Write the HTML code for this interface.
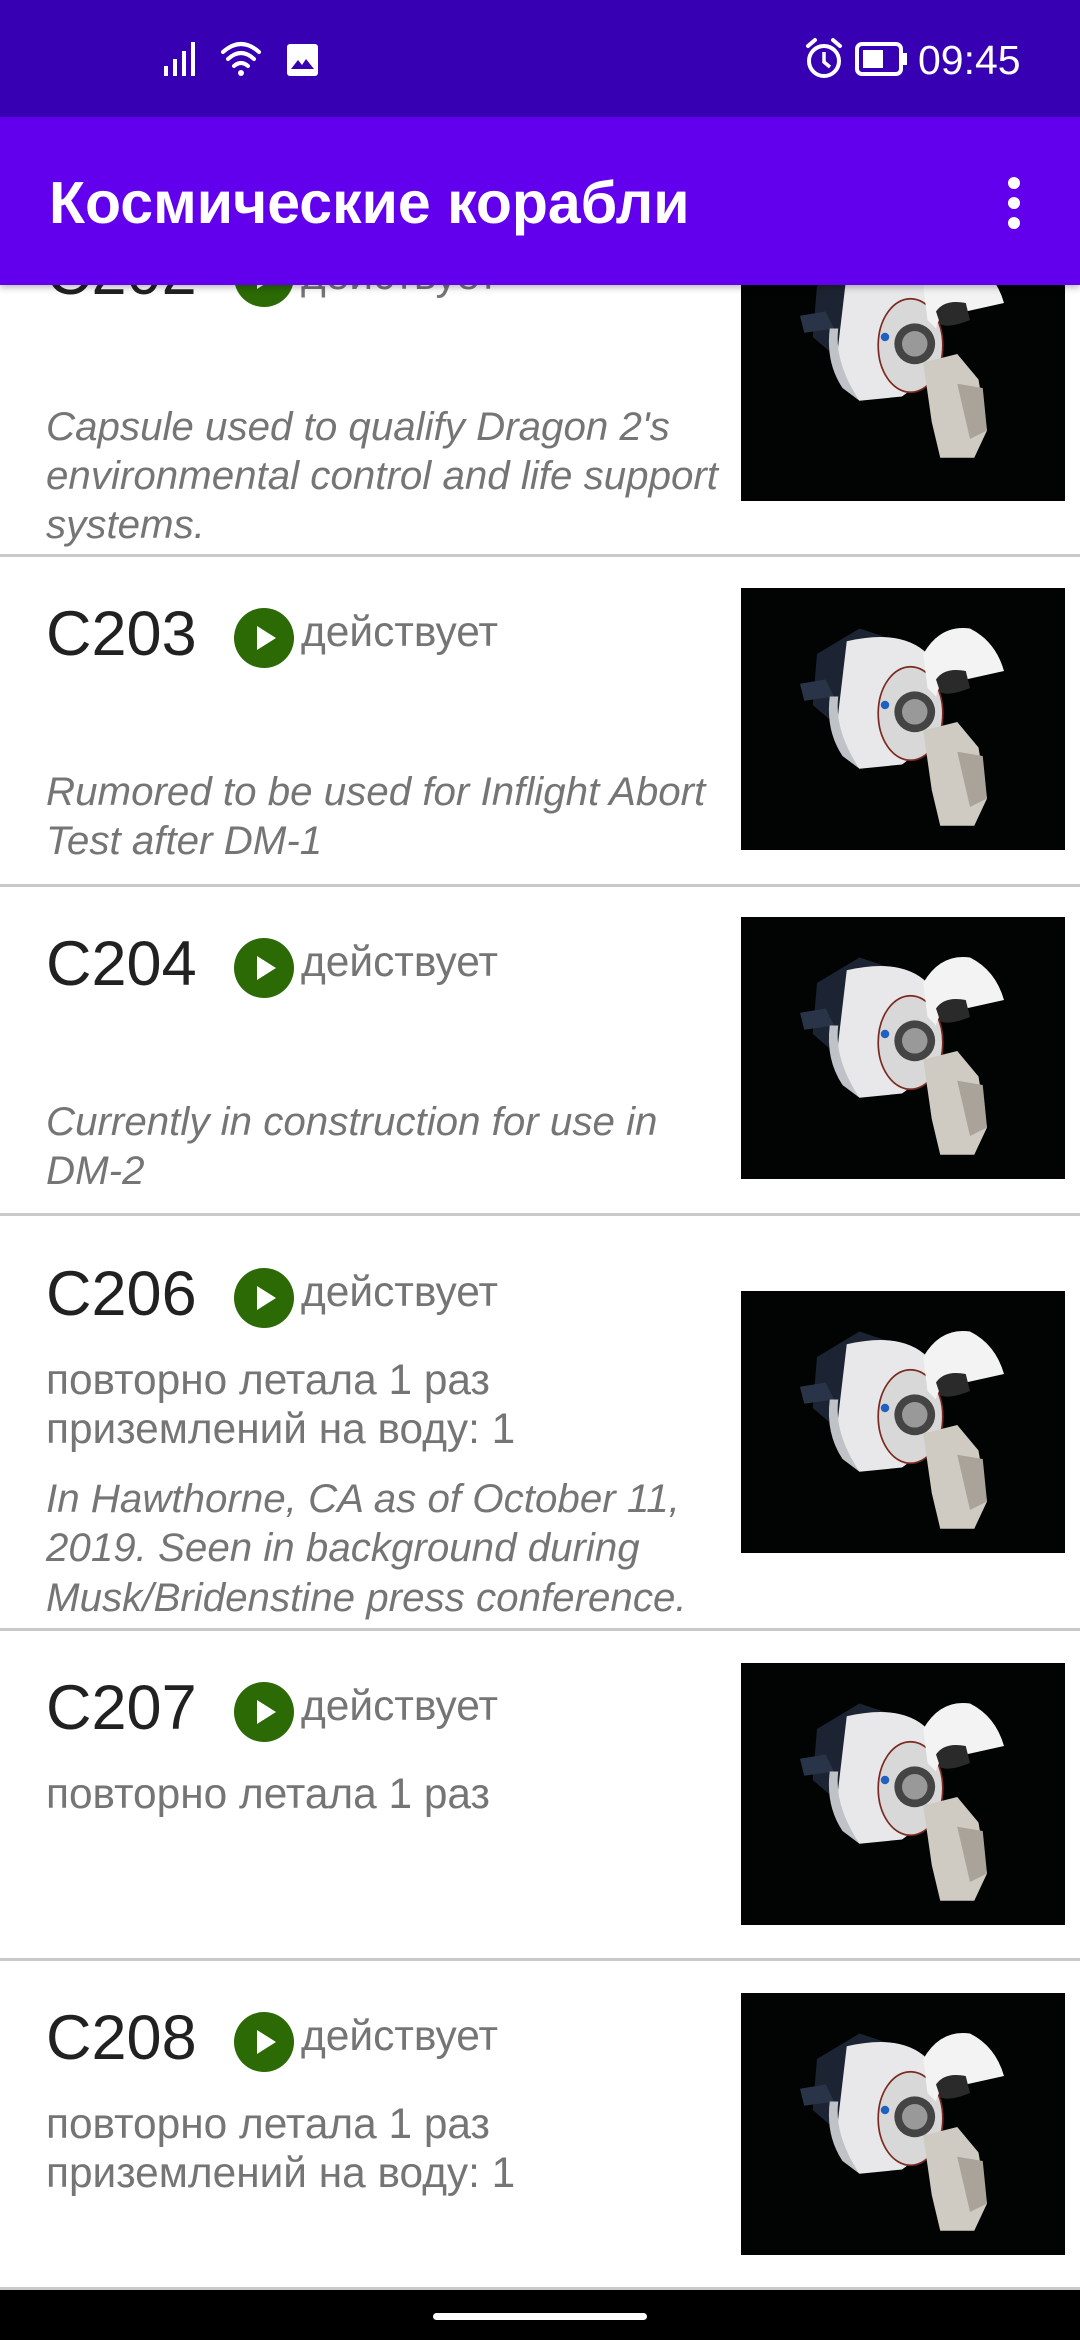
<!DOCTYPE html>
<html><head><meta charset="utf-8"><style>
*{margin:0;padding:0;box-sizing:border-box}
body{width:1080px;height:2340px;background:#fff;position:relative;overflow:hidden;font-family:"Liberation Sans",Roboto,sans-serif}
.a{position:absolute;white-space:nowrap}
.t{font-size:63px;color:#212121;line-height:70px;left:46px}
.s{font-size:42.5px;color:#757575;line-height:49px;left:301px}
.l{font-size:42.4px;color:#757575;line-height:49px;left:46px}
.d{font-size:40.3px;color:#757575;line-height:49px;left:46px;font-style:italic}
.c{position:absolute;left:234px;width:60px;height:60px;border-radius:50%;background:#2b6a04}
.c:after{content:"";position:absolute;left:23px;top:18px;border-left:19px solid #fff;border-top:12px solid transparent;border-bottom:12px solid transparent}
.hr{position:absolute;left:0;width:1080px;height:3px;background:#c9c9c9}
.img{position:absolute;left:741px;width:324px;height:262px;background:#020404;overflow:hidden}
</style></head><body>
<svg width="0" height="0" style="position:absolute"><defs>
<g id="cap" transform="translate(25,15) scale(0.85)">
<path d="M60 60 L110 30 L140 40 L120 120 L90 150 L55 120 Z" fill="#1c2433"/>
<path d="M40 95 L70 90 L80 110 L45 115Z" fill="#2a3448"/>
<path d="M95 45 Q160 30 190 60 L200 120 Q190 170 160 190 L110 195 Q80 170 85 130 Z" fill="#e8e8ea"/>
<path d="M85 110 Q80 150 110 195 L90 180 Q70 150 75 110Z" fill="#bfc2c6"/>
<ellipse cx="170" cy="130" rx="38" ry="55" fill="#d8d8d8" stroke="#7a2a20" stroke-width="2"/>
<circle cx="175" cy="128" r="24" fill="#444"/>
<circle cx="175" cy="128" r="15" fill="#999"/>
<path d="M185 60 Q205 25 240 30 Q270 45 280 80 L235 90 Q205 85 200 110 L190 100 Z" fill="#f3f3f3"/>
<path d="M200 90 Q210 75 235 80 L240 100 Q215 110 205 105Z" fill="#2a2a2a"/>
<path d="M185 150 L225 140 L250 170 L260 230 L245 262 L205 262 L195 220 Z" fill="#cfcac2"/>
<path d="M225 175 L255 180 L260 230 L240 240Z" fill="#a9a39a"/>
<circle cx="140" cy="120" r="5" fill="#2060c0"/>
</g></defs></svg>

<div class="a" style="left:0;top:0;width:1080px;height:117px;background:#3700B3"></div>
<svg class="a" style="left:160px;top:38px" width="170" height="40" viewBox="0 0 170 40">
<g fill="#fff"><rect x="4" y="28" width="4" height="10"/><rect x="13" y="21" width="4" height="17"/><rect x="22" y="13" width="4" height="25"/><rect x="31" y="4" width="4" height="34"/></g>
<g fill="none" stroke="#fff" stroke-width="4" stroke-linecap="round"><path d="M63 14 Q81 -2 99 14"/><path d="M68 21 Q81 9 94 21"/><path d="M74 28 Q81 22 88 28"/></g>
<circle cx="81" cy="35" r="3" fill="#fff"/>
<rect x="127" y="6" width="31" height="32" rx="3" fill="#fff"/>
<path d="M131 31 L138 22 L142 27 L146 21 L154 31Z" fill="#3700B3"/>
</svg>
<svg class="a" style="left:802px;top:36px" width="115" height="46" viewBox="0 0 115 46">
<circle cx="22" cy="25" r="15" fill="none" stroke="#fff" stroke-width="4"/>
<path d="M22 16 V26 L28 31" fill="none" stroke="#fff" stroke-width="3.5"/>
<path d="M6 10 L13 4 M38 10 L31 4" stroke="#fff" stroke-width="4" stroke-linecap="round"/>
<rect x="55" y="8" width="44" height="30" rx="5" fill="none" stroke="#fff" stroke-width="4"/>
<rect x="61" y="14" width="20" height="18" fill="#fff"/>
<rect x="101" y="17" width="4" height="12" fill="#fff"/>
</svg>
<div class="a" style="left:918px;top:36px;font-size:41px;color:#fff;line-height:48px">09:45</div>

<div class="a" style="left:0;top:117px;width:1080px;height:168px;background:#6200EE;box-shadow:0 3px 6px rgba(0,0,0,.25);z-index:5">
<div class="a" style="left:49px;top:53px;font-size:59px;font-weight:bold;color:#fff;line-height:66px">Космические корабли</div>
<div class="a" style="left:1008px;top:60px;width:12px;height:12px;border-radius:50%;background:#fff"></div>
<div class="a" style="left:1008px;top:80px;width:12px;height:12px;border-radius:50%;background:#fff"></div>
<div class="a" style="left:1008px;top:100px;width:12px;height:12px;border-radius:50%;background:#fff"></div>
</div>

<div class="a t" style="top:238px">C202</div>
<div class="c" style="top:247px"></div>
<div class="a s" style="top:251px">действует</div>
<div class="img" style="top:240px;height:261px"><svg width="324" height="262" viewBox="0 0 324 262" style="position:absolute;top:-20px"><use href="#cap"/></svg></div>
<div class="a d" style="top:402px">Capsule used to qualify Dragon 2's</div>
<div class="a d" style="top:451px">environmental control and life support</div>
<div class="a d" style="top:500px">systems.</div>
<div class="hr" style="top:554px"></div>

<div class="a t" style="top:599px">C203</div>
<div class="c" style="top:608px"></div>
<div class="a s" style="top:608px">действует</div>
<div class="img" style="top:588px"><svg width="324" height="262" viewBox="0 0 324 262"><use href="#cap"/></svg></div>
<div class="a d" style="top:767px">Rumored to be used for Inflight Abort</div>
<div class="a d" style="top:816px">Test after DM-1</div>
<div class="hr" style="top:884px"></div>

<div class="a t" style="top:929px">C204</div>
<div class="c" style="top:938px"></div>
<div class="a s" style="top:938px">действует</div>
<div class="img" style="top:917px"><svg width="324" height="262" viewBox="0 0 324 262"><use href="#cap"/></svg></div>
<div class="a d" style="top:1097px">Currently in construction for use in</div>
<div class="a d" style="top:1146px">DM-2</div>
<div class="hr" style="top:1213px"></div>

<div class="a t" style="top:1259px">C206</div>
<div class="c" style="top:1268px"></div>
<div class="a s" style="top:1268px">действует</div>
<div class="img" style="top:1291px"><svg width="324" height="262" viewBox="0 0 324 262"><use href="#cap"/></svg></div>
<div class="a l" style="top:1355px">повторно летала 1 раз</div>
<div class="a l" style="top:1404px">приземлений на воду: 1</div>
<div class="a d" style="top:1474px">In Hawthorne, CA as of October 11,</div>
<div class="a d" style="top:1523px">2019. Seen in background during</div>
<div class="a d" style="top:1573px">Musk/Bridenstine press conference.</div>
<div class="hr" style="top:1628px"></div>

<div class="a t" style="top:1673px">C207</div>
<div class="c" style="top:1682px"></div>
<div class="a s" style="top:1682px">действует</div>
<div class="img" style="top:1663px"><svg width="324" height="262" viewBox="0 0 324 262"><use href="#cap"/></svg></div>
<div class="a l" style="top:1769px">повторно летала 1 раз</div>
<div class="hr" style="top:1958px"></div>

<div class="a t" style="top:2003px">C208</div>
<div class="c" style="top:2012px"></div>
<div class="a s" style="top:2012px">действует</div>
<div class="img" style="top:1993px"><svg width="324" height="262" viewBox="0 0 324 262"><use href="#cap"/></svg></div>
<div class="a l" style="top:2099px">повторно летала 1 раз</div>
<div class="a l" style="top:2148px">приземлений на воду: 1</div>
<div class="hr" style="top:2287px"></div>

<div class="a" style="left:0;top:2290px;width:1080px;height:50px;background:#000"></div>
<div class="a" style="left:433px;top:2313px;width:214px;height:7px;border-radius:4px;background:#fff"></div>
</body></html>
